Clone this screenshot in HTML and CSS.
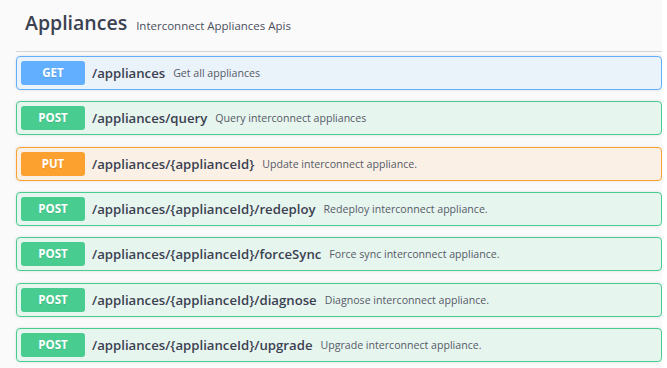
FILE: index.html
```html
<!DOCTYPE html>
<html>
<head>
    <title>Appliances API</title>
    <link rel="stylesheet" href="styles.css">
</head>
<body>
    <div class="page">
        <div class="tag">
            <h3 class="tag-title">
                <span class="tag-name">Appliances</span>
                <small class="tag-desc">Interconnect Appliances Apis</small>
            </h3>
        </div>

        <div class="opblock get">
            <span class="method">GET</span>
            <span class="path">/appliances</span>
            <span class="summary">Get all appliances</span>
        </div>
        <div class="opblock post">
            <span class="method">POST</span>
            <span class="path">/appliances/query</span>
            <span class="summary">Query interconnect appliances</span>
        </div>
        <div class="opblock put">
            <span class="method">PUT</span>
            <span class="path">/appliances/{applianceId}</span>
            <span class="summary">Update interconnect appliance.</span>
        </div>
        <div class="opblock post">
            <span class="method">POST</span>
            <span class="path">/appliances/{applianceId}/redeploy</span>
            <span class="summary">Redeploy interconnect appliance.</span>
        </div>
        <div class="opblock post">
            <span class="method">POST</span>
            <span class="path">/appliances/{applianceId}/forceSync</span>
            <span class="summary">Force sync interconnect appliance.</span>
        </div>
        <div class="opblock post">
            <span class="method">POST</span>
            <span class="path">/appliances/{applianceId}/diagnose</span>
            <span class="summary">Diagnose interconnect appliance.</span>
        </div>
        <div class="opblock post">
            <span class="method">POST</span>
            <span class="path">/appliances/{applianceId}/upgrade</span>
            <span class="summary">Upgrade interconnect appliance.</span>
        </div>
    </div>
</body>
</html>
```

FILE: styles.css
```css
body {
    margin: 0;
    background-color: #fff;
    font-family: "Open Sans", sans-serif;
    color: #3b4151;
}
.page {
    width: 646px;
    height: 368px;
    padding-left: 16px;
    background-color: #fafafa;
    overflow: hidden;
}
.tag {
    height: 51px;
    border-bottom: 1px solid rgba(59,65,81,0.2);
    margin-bottom: 4px;
}
.tag-title {
    margin: 0;
    padding: 9px 0 0 9px;
    display: flex;
    align-items: baseline;
    font-weight: normal;
}
.tag-name {
    font-size: 19.5px;
    font-weight: 600;
}
.tag-desc {
    font-size: 11.5px;
    margin-left: 9px;
    color: #4a4f5c;
}
.opblock {
    display: flex;
    align-items: center;
    height: 32px;
    margin-bottom: 11.33px;
    padding: 0 4px;
    border: 1px solid;
    border-radius: 4px;
    box-shadow: 0 0 3px rgba(0,0,0,0.12);
}
.method {
    width: 64px;
    height: 24px;
    line-height: 24px;
    border-radius: 3px;
    text-align: center;
    color: #fff;
    font-size: 11.5px;
    font-weight: 700;
    text-shadow: 0 1px 0 rgba(0,0,0,0.1);
    flex-shrink: 0;
}
.path {
    margin-left: 7px;
    font-size: 13.2px;
    font-weight: 600;
    white-space: nowrap;
}
.summary {
    margin-left: 8px;
    font-size: 10.6px;
    color: #555a66;
    white-space: nowrap;
}
.get {
    background-color: rgba(97,175,254,0.1);
    border-color: #61affe;
}
.get .method {
    background-color: #61affe;
}
.post {
    background-color: rgba(73,204,144,0.1);
    border-color: #49cc90;
}
.post .method {
    background-color: #49cc90;
}
.put {
    background-color: rgba(252,161,48,0.1);
    border-color: #fca130;
}
.put .method {
    background-color: #fca130;
}
```
